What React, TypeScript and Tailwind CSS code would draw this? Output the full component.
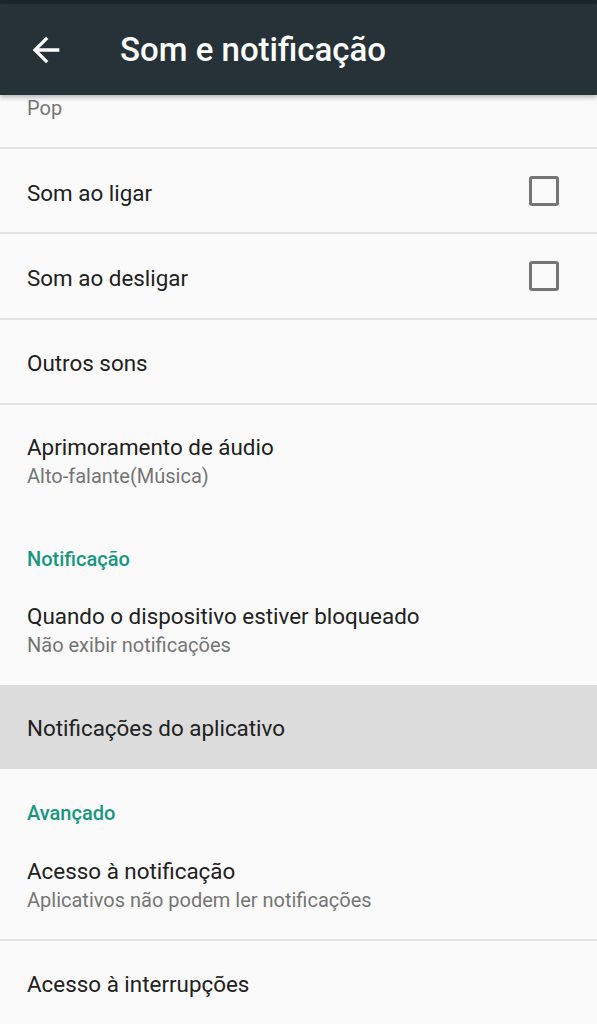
import React from "react";

const font = { fontFamily: "Roboto, 'Liberation Sans', sans-serif" };

function Checkbox() {
  return <div className="w-[30px] h-[30px] border-[3px] border-[#757575] rounded-[3px] mr-[8px]" />;
}

function Divider() {
  return <div className="h-[2px] bg-[#e3e3e3]" />;
}

function OneLine({ title, checkbox }: { title: string; checkbox?: boolean }) {
  return (
    <div className="h-[84px] flex items-center justify-between pl-[27px] pr-[30px]">
      <span className="text-[22.4px] leading-[30px] text-[#212121] pt-[4px]">{title}</span>
      {checkbox && <Checkbox />}
    </div>
  );
}

export default function App() {
  return (
    <div className="w-[597px] h-[1024px] overflow-hidden bg-[#fafafa] flex flex-col" style={font}>
      <div className="h-[4px] bg-[#1c2528]" />
      <div className="h-[92px] bg-[#263238] flex items-center relative z-10 shadow-[0_2px_5px_rgba(0,0,0,0.3)]">
        <svg width="40" height="40" viewBox="0 0 24 24" className="ml-[26px] mr-[54px]">
          <path d="M20 11H7.83l5.59-5.59L12 4l-8 8 8 8 1.41-1.41L7.83 13H20v-2z" fill="#ffffff" />
        </svg>
        <span className="text-[33px] font-medium text-white leading-none">Som e notificação</span>
      </div>
      <div className="h-[52px] pl-[27px] pt-[1px]">
        <span className="text-[20px] leading-[24px] text-[#757575]">Pop</span>
      </div>
      <Divider />
      <OneLine title="Som ao ligar" checkbox />
      <Divider />
      <OneLine title="Som ao desligar" checkbox />
      <Divider />
      <OneLine title="Outros sons" />
      <Divider />
      <div className="pl-[27px] pt-[27px] flex flex-col">
        <span className="text-[22.4px] leading-[30px] text-[#212121]">Aprimoramento de áudio</span>
        <span className="text-[20px] leading-[28px] text-[#757575]">Alto-falante(Música)</span>
      </div>
      <div className="pl-[27px] pt-[56px]">
        <span className="text-[20px] leading-[26px] font-medium text-[#17977f]">Notificação</span>
      </div>
      <div className="pl-[27px] pt-[28px] pb-[26px] flex flex-col">
        <span className="text-[22.4px] leading-[30px] text-[#212121]">Quando o dispositivo estiver bloqueado</span>
        <span className="text-[20px] leading-[28px] text-[#757575]">Não exibir notificações</span>
      </div>
      <div className="h-[84px] bg-[#dcdcdc] flex items-center pl-[27px]">
        <span className="text-[22.4px] leading-[30px] text-[#212121] pt-[3px]">Notificações do aplicativo</span>
      </div>
      <div className="pl-[27px] pt-[31px]">
        <span className="text-[20px] leading-[26px] font-medium text-[#17977f]">Avançado</span>
      </div>
      <div className="pl-[27px] pt-[29px] pb-[25px] flex flex-col">
        <span className="text-[22.4px] leading-[30px] text-[#212121]">Acesso à notificação</span>
        <span className="text-[20px] leading-[28px] text-[#757575]">Aplicativos não podem ler notificações</span>
      </div>
      <Divider />
      <OneLine title="Acesso à interrupções" />
    </div>
  );
}
